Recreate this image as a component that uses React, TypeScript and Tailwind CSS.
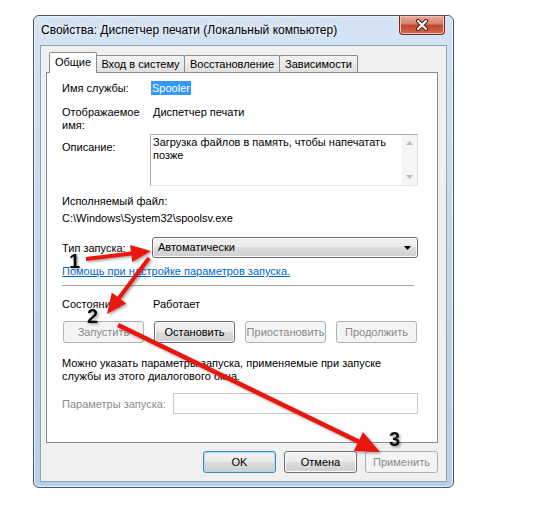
import React from "react";

type BtnProps = {
  label: string;
  disabled?: boolean;
  primary?: boolean;
  width: string;
};

function Btn({ label, disabled, primary, width }: BtnProps) {
  const look = disabled
    ? "border-[#adb2b5] bg-[#f4f4f4] text-[#8a8a8a]"
    : primary
    ? "border-[#3c8dc5] bg-[linear-gradient(#f2f2f2,#ebebeb_50%,#dddddd_50%,#cfcfcf)] shadow-[inset_0_0_0_1px_#a9dcf4] text-black"
    : "border-[#707070] bg-[linear-gradient(#f2f2f2,#ebebeb_50%,#dddddd_50%,#cfcfcf)] shadow-[inset_0_0_0_1px_#fbfbfb] text-black";
  return (
    <div
      className={`${width} h-[22px] shrink-0 rounded-[3px] border flex items-center justify-center leading-none whitespace-nowrap ${look}`}
    >
      {label}
    </div>
  );
}

const tabs = [
  { label: "Общие", w: "w-[48px]", active: true },
  { label: "Вход в систему", w: "w-[89px]", active: false },
  { label: "Восстановление", w: "w-[96px]", active: false },
  { label: "Зависимости", w: "w-[79px]", active: false },
];

// arrow outline from tail to tip, shaft w, head length hl, head width hw
function arrow(x1: number, y1: number, x2: number, y2: number, w: number, hl: number, hw: number) {
  const len = Math.hypot(x2 - x1, y2 - y1);
  const dx = (x2 - x1) / len;
  const dy = (y2 - y1) / len;
  const nx = -dy;
  const ny = dx;
  const bx = x2 - dx * hl;
  const by = y2 - dy * hl;
  const p = [
    [x1 + (nx * w) / 2, y1 + (ny * w) / 2],
    [bx + (nx * w) / 2, by + (ny * w) / 2],
    [bx + (nx * hw) / 2, by + (ny * hw) / 2],
    [x2, y2],
    [bx - (nx * hw) / 2, by - (ny * hw) / 2],
    [bx - (nx * w) / 2, by - (ny * w) / 2],
    [x1 - (nx * w) / 2, y1 - (ny * w) / 2],
  ];
  return p.map((q) => q.map((v) => v.toFixed(1)).join(",")).join(" ");
}

export default function App() {
  return (
    <div className="relative w-[542px] h-[509px] bg-white overflow-hidden text-[11px] text-black font-['Liberation_Sans',Arial,sans-serif]">
      {/* Window */}
      <div className="ml-[33px] mt-[15px] w-[421px] h-[473px] rounded-[6px] border border-[#4a5562] bg-linear-to-b from-[#d4e4f5] via-[#c3d7ed] to-[#b8cfe8] shadow-[inset_0_0_0_1px_#e9f1fa] flex flex-col">
        {/* Title bar */}
        <div className="h-[29px] flex items-start justify-between">
          <div className="pl-[7px] pt-[7px] text-[12px] leading-[14px] [text-shadow:0_0_6px_#ffffff]">
            Свойства: Диспетчер печати (Локальный компьютер)
          </div>
          <div className="mr-[8px] w-[46px] h-[19px] rounded-b-[4px] border border-t-0 border-[#6b2d22] bg-[linear-gradient(#e9a99a,#d47f6b_45%,#c2452c_50%,#d3694c)] flex items-center justify-center shadow-[inset_0_0_0_1px_#f1c3b6]">
            <svg width="14" height="12" viewBox="0 0 14 12">
              <path d="M3 2 L11 10 M11 2 L3 10" stroke="#4b1a10" strokeWidth="4.2" strokeLinecap="round" />
              <path d="M3 2 L11 10 M11 2 L3 10" stroke="#ffffff" strokeWidth="2.2" strokeLinecap="round" />
            </svg>
          </div>
        </div>

        {/* Client area */}
        <div className="mx-[6px] h-[437px] border border-[#8ea3bd] bg-[#f0f0f0] pl-[5px] pr-[8px] pt-[6px]">
          {/* Tabs */}
          <div className="flex items-end h-[20px] pl-[3px]">
            {tabs.map((t) =>
              t.active ? (
                <div
                  key={t.label}
                  className={`${t.w} relative z-10 -mb-px h-[21px] border border-b-0 border-[#898c95] bg-white rounded-t-[2px] flex items-center justify-center pb-px whitespace-nowrap`}
                >
                  {t.label}
                </div>
              ) : (
                <div
                  key={t.label}
                  className={`${t.w} -ml-px h-[17px] border border-b-0 border-[#898c95] bg-linear-to-b from-[#f3f3f3] to-[#e1e1e1] rounded-t-[2px] flex items-center justify-center whitespace-nowrap`}
                >
                  {t.label}
                </div>
              )
            )}
          </div>

          {/* Panel */}
          <div className="h-[371px] border border-[#898c95] bg-white pl-[15px]">
            <div className="mt-[8px] flex leading-[14px]">
              <div className="w-[90px] shrink-0">Имя службы:</div>
              <span className="-ml-px px-px bg-[#3399ff] text-white">Spooler</span>
            </div>

            <div className="mt-[11px] flex leading-[13px]">
              <div className="w-[90px] shrink-0">
                Отображаемое
                <br />
                имя:
              </div>
              <div className="pl-px">Диспетчер печати</div>
            </div>

            <div className="mt-[2px] flex">
              <div className="w-[88px] shrink-0 pt-[6px] leading-[14px]">Описание:</div>
              <div className="w-[268px] h-[52px] border border-[#abadb3] border-r-[#dbdfe6] border-b-[#e3e9ef] flex">
                <div className="flex-1 px-[2px] pt-px leading-[13px]">
                  Загрузка файлов в память, чтобы напечатать
                  <br />
                  позже
                </div>
                <div className="w-[15px] bg-[#f5f5f5] flex flex-col justify-between items-center py-[6px]">
                  <svg width="7" height="4" viewBox="0 0 7 4">
                    <path d="M0 4 L3.5 0 L7 4 Z" fill="#bdbdbd" />
                  </svg>
                  <svg width="7" height="4" viewBox="0 0 7 4">
                    <path d="M0 0 L3.5 4 L7 0 Z" fill="#bdbdbd" />
                  </svg>
                </div>
              </div>
            </div>

            <div className="mt-[8px] leading-[14px]">Исполняемый файл:</div>
            <div className="mt-[3px] leading-[14px]">C:\Windows\System32\spoolsv.exe</div>

            <div className="mt-[12px] flex items-center">
              <div className="w-[90px] shrink-0 leading-[14px]">Тип запуска:</div>
              <div className="w-[266px] h-[21px] rounded-[3px] border border-[#707070] bg-[linear-gradient(#f2f2f2,#ebebeb_50%,#dddddd_50%,#cfcfcf)] shadow-[inset_0_0_0_1px_#fbfbfb] flex items-center justify-between pl-[5px] pr-[6px]">
                <span>Автоматически</span>
                <svg width="7" height="4" viewBox="0 0 7 4">
                  <path d="M0 0 L7 0 L3.5 4 Z" fill="#000" />
                </svg>
              </div>
            </div>

            <div className="mt-[6px] leading-[14px] text-[#0066cc] underline">
              Помощь при настройке параметров запуска.
            </div>

            <div className="mt-[7px] w-[352px] h-px bg-[#a0a0a0]" />

            <div className="mt-[11px] flex leading-[14px]">
              <div className="w-[90px] shrink-0">Состояние:</div>
              <div className="pl-px">Работает</div>
            </div>

            <div className="mt-[10px] ml-px flex gap-[10px]">
              <Btn label="Запустить" width="w-[81px]" disabled />
              <Btn label="Остановить" width="w-[81px]" />
              <Btn label="Приостановить" width="w-[81px]" disabled />
              <Btn label="Продолжить" width="w-[81px]" disabled />
            </div>

            <div className="mt-[14px] leading-[13px]">
              Можно указать параметры запуска, применяемые при запуске
              <br />
              службы из этого диалогового окна.
            </div>

            <div className="mt-[10px] flex items-center">
              <div className="w-[111px] shrink-0 leading-[14px] whitespace-nowrap text-[#8a8a8a]">Параметры запуска:</div>
              <div className="w-[245px] h-[21px] border border-[#c5c9cf] bg-white" />
            </div>
          </div>

          {/* Bottom buttons */}
          <div className="mt-[8px] flex justify-end gap-[8px]">
            <Btn label="OK" width="w-[73px]" primary />
            <Btn label="Отмена" width="w-[73px]" />
            <Btn label="Применить" width="w-[73px]" disabled />
          </div>
        </div>
      </div>

      {/* Annotation arrows */}
      <svg className="absolute inset-0 pointer-events-none" width="542" height="509" viewBox="0 0 542 509">
        <defs>
          <filter id="sh" x="-20%" y="-20%" width="140%" height="140%">
            <feDropShadow dx="1.5" dy="1.5" stdDeviation="1.3" floodColor="#000" floodOpacity="0.35" />
          </filter>
        </defs>
        <g fill="#e8160f" filter="url(#sh)">
          <polygon points={arrow(86, 259, 151, 251, 4, 20, 17)} />
          <polygon points={arrow(149, 258, 107, 314, 4, 20, 18)} />
          <polygon points={arrow(118, 325, 380, 452, 4.5, 24, 21)} />
        </g>
        <g fontFamily="'Liberation Sans', Arial, sans-serif" fontWeight="bold" fontSize="20" fill="#111" filter="url(#sh)">
          <text x="69" y="268">1</text>
          <text x="87" y="323">2</text>
          <text x="389" y="446">3</text>
        </g>
      </svg>
    </div>
  );
}
